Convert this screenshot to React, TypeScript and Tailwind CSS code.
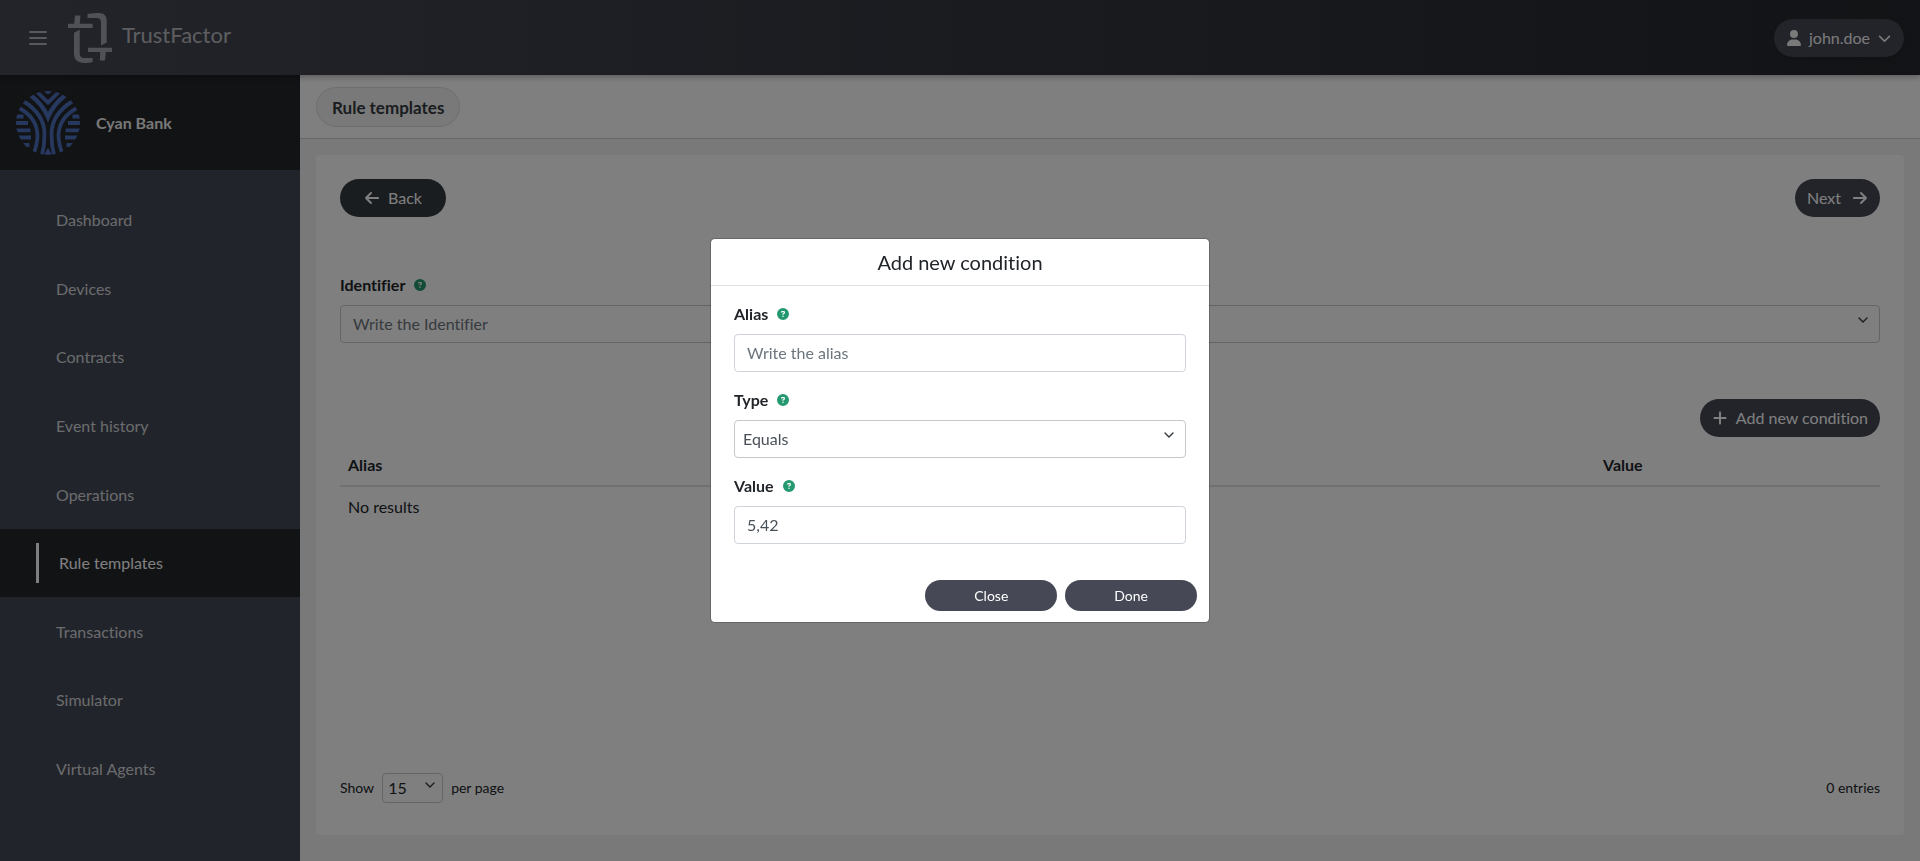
import { useState, type ReactNode } from 'react';
import { FaArrowLeft, FaArrowRight, FaChevronDown, FaCircleQuestion, FaPlus, FaUser } from 'react-icons/fa6';

const NAV_ITEMS = [
  'Dashboard',
  'Devices',
  'Contracts',
  'Event history',
  'Operations',
  'Rule templates',
  'Transactions',
  'Simulator',
  'Virtual Agents',
];

const ACTIVE_ITEM = 'Rule templates';

function MenuIcon() {
  return (
    <svg width="18" height="16" viewBox="0 0 18 16" fill="none" stroke="currentColor" strokeWidth="2" strokeLinecap="round" aria-hidden="true">
      <path d="M1 2h16M1 8h16M1 14h16" />
    </svg>
  );
}

function TrustFactorLogo() {
  return (
    <svg width="44" height="50" viewBox="0 0 44 50" fill="#9fa3ad" aria-hidden="true">
      <path d="M7 2.500h5.400l-.6 8.200h12.900v4.300H0v-4.300h6.200z" />
      <path d="M19.500 1C24 .2 29 0 31 0c4.600 0 7.700 2.700 7.700 7.500V29.500L33 32.500V9.500C33 6.400 31.500 5 28.500 5H19.500z" />
      <path d="M37 47.500h-5.200l.5-8.500H20v-4.300h24V39h-6.200z" />
      <path d="M24.700 49c-3 .8-5.700 1-8 1C9.500 50 6 46.500 6 40.500V19.800l5.700-3v22.700c0 4 1.600 5.600 5 5.600h8z" />
    </svg>
  );
}

function BankLogo() {
  return (
    <svg width="64" height="64" viewBox="0 0 64 64" fill="none" stroke="#4c70ba" strokeWidth="3.800" aria-hidden="true">
      <defs>
        <clipPath id="bank-clip">
          <circle cx="32" cy="32" r="32" />
        </clipPath>
      </defs>
      <g clipPath="url(#bank-clip)">
        <path d="M28-2l4 3 4-3" />
        <path d="M19-1l13 12.500L45-1" />
        <path d="M15 4.500Q27 14 32 26q5-12 17-21.500" strokeWidth="4.400" />
        <path d="M7 10Q28.500 23 28.500 43 28.500 54 26 64" />
        <path d="M57 10Q35.500 23 35.500 43 35.500 54 38 64" />
        <path d="M1 16Q21.500 26 21.500 45 21 55 17 64" />
        <path d="M63 16Q42.500 26 42.500 45 43 55 47 64" />
        <path d="M0 25.500h7.500M56.500 25.500H64M0 32h12M52 32h12M0 39.300h14.500M49.500 39.300H64M0 46.500h15M49 46.500h15M0 54h13.500M50.500 54H64" />
        <path d="M30 64l2-3.500 2 3.500" />
      </g>
    </svg>
  );
}

function SelectArrow() {
  return (
    <svg width="10" height="6" viewBox="0 0 10 6" fill="none" stroke="#343a40" strokeWidth="1.400" strokeLinecap="round" aria-hidden="true">
      <path d="M1 1l4 4 4-4" />
    </svg>
  );
}

function FieldLabel({ htmlFor, children }: { htmlFor: string; children: ReactNode }) {
  return (
    <label htmlFor={htmlFor} className="mb-2 flex items-center gap-[9px] font-bold leading-6">
      {children}
      <FaCircleQuestion className="size-3 text-[#24996f]" />
    </label>
  );
}

function ConditionModal() {
  const [value, setValue] = useState('5,42');

  return (
    <div className="fixed inset-0 z-20 flex items-center justify-center bg-black/50">
      <div
        role="dialog"
        aria-modal="true"
        aria-labelledby="modal-title"
        className="w-[500px] rounded-[5px] border border-black/20 bg-white bg-clip-padding"
      >
        <div className="border-b border-[#dee2e6] py-2">
          <h2 id="modal-title" className="text-center text-xl leading-[30px]">Add new condition</h2>
        </div>

        <div className="space-y-4 px-[23px] pt-4">
          <div>
            <FieldLabel htmlFor="alias">Alias</FieldLabel>
            <input
              id="alias"
              type="text"
              placeholder="Write the alias"
              className="block h-[38px] w-full rounded border border-[#ced4da] px-3 pb-px text-[#495057] placeholder:text-[#6c757d]"
            />
          </div>
          <div>
            <FieldLabel htmlFor="type">Type</FieldLabel>
            <div className="relative">
              <select id="type" className="block h-[38px] w-full appearance-none rounded border border-[#c8c8c8] px-2 text-[#495057]">
                <option>Equals</option>
                <option>Greater than</option>
                <option>Less than</option>
              </select>
              <span className="pointer-events-none absolute top-3 right-3">
                <SelectArrow />
              </span>
            </div>
          </div>
          <div>
            <FieldLabel htmlFor="value">Value</FieldLabel>
            <input
              id="value"
              type="text"
              value={value}
              onChange={(e) => setValue(e.target.value)}
              className="block h-[38px] w-full rounded border border-[#ced4da] px-3 pb-px text-[#495057]"
            />
          </div>
        </div>

        <div className="mt-9 flex justify-end gap-2 px-3 pb-[11px] text-sm text-white">
          <button type="button" className="h-[31px] rounded-full bg-[#464955] px-[49px]">Close</button>
          <button type="button" className="h-[31px] rounded-full bg-[#464955] px-[49px]">Done</button>
        </div>
      </div>
    </div>
  );
}

export default function App() {
  return (
    <div className="flex min-h-screen flex-col bg-[#f3f3f3] font-[Lato,sans-serif] text-base text-[#212529] [font-variant-ligatures:none]">
      {/* Top bar */}
      <header className="z-10 flex h-[75px] items-center bg-gradient-to-r from-[#454955] to-[#25272c] pr-4 pl-[29px] shadow-[0_2px_6px_rgba(0,0,0,0.3)]">
        <button type="button" aria-label="Toggle menu" className="text-[#b0b2b8]">
          <MenuIcon />
        </button>
        <div className="ml-[21px] flex items-center gap-[10px]">
          <TrustFactorLogo />
          <span className="pb-1.5 text-[22px] text-[#bcbdc1]">TrustFactor</span>
        </div>
        <button type="button" className="ml-auto flex h-[38px] items-center gap-2 rounded-full bg-[#454955] px-[13px] text-[#f4f4f4] shadow-md">
          <FaUser className="h-4 w-[14px]" />
          john.doe
          <FaChevronDown className="h-[14px] w-[13px]" />
        </button>
      </header>

      <div className="flex flex-1">
        {/* Sidebar */}
        <aside className="flex w-[300px] shrink-0 flex-col bg-[#444956]">
          <div className="flex h-[95px] items-center gap-4 bg-[#24262b] px-4">
            <BankLogo />
            <span className="font-bold text-[#f0f0f0]">Cyan Bank</span>
          </div>
          <nav className="flex flex-1 flex-col pt-4 pb-[58px]">
            {NAV_ITEMS.map((item) =>
              item === ACTIVE_ITEM ? (
                <a key={item} href="#" aria-current="page" className="flex flex-1 items-center bg-[#24262b] pl-9 text-white">
                  <span className="flex h-10 items-center border-l-3 border-white pl-5">{item}</span>
                </a>
              ) : (
                <a key={item} href="#" className="flex flex-1 items-center pl-14 text-[#d6d7da]">
                  {item}
                </a>
              )
            )}
          </nav>
        </aside>

        <main className="flex min-w-0 flex-1 flex-col">
          <div className="flex h-16 items-center border-b border-[#d2d2d2] bg-white px-4 pb-[11px] pt-3">
            <h1 className="flex h-10 items-center rounded-full border border-[#dddddd] bg-[#f3f3f3] px-[15px] pt-px text-[17px] font-bold text-[#343a40]">
              Rule templates
            </h1>
          </div>

          {/* Content card */}
          <section className="mx-4 mt-4 mb-[26px] flex flex-1 flex-col rounded bg-white p-6">
            <div className="flex justify-between text-white">
              <button type="button" className="flex h-[38px] items-center gap-2 rounded-full bg-[#343a40] px-6">
                <FaArrowLeft className="size-4" />
                Back
              </button>
              <button type="button" className="flex h-[38px] items-center gap-[11px] rounded-full bg-[#454955] px-3">
                Next
                <FaArrowRight className="size-4" />
              </button>
            </div>

            <div className="mt-14">
              <FieldLabel htmlFor="identifier">Identifier</FieldLabel>
              <div className="relative">
                <select id="identifier" className="block h-[38px] w-full appearance-none rounded border border-[#c8c8c8] px-3 text-[#6c757d]">
                  <option>Write the Identifier</option>
                </select>
                <span className="pointer-events-none absolute top-3 right-3">
                  <SelectArrow />
                </span>
              </div>
            </div>

            <button type="button" className="mt-14 flex h-[38px] items-center gap-2 self-end rounded-full bg-[#454955] px-3 text-white">
              <FaPlus className="size-4" />
              Add new condition
            </button>

            <table className="mt-2 w-full table-fixed text-left">
              <thead>
                <tr className="border-b-2 border-[#dee2e6]">
                  <th className="w-2/5 px-2 pt-2 pb-2 leading-6">Alias</th>
                  <th className="px-2 leading-6">Type</th>
                  <th className="w-[285px] px-2 leading-6">Value</th>
                </tr>
              </thead>
              <tbody>
                <tr>
                  <td colSpan={3} className="px-2 py-2 leading-6">No results</td>
                </tr>
              </tbody>
            </table>

            <div className="mt-auto mb-2 flex items-center text-sm">
              <label htmlFor="page-size">Show</label>
              <div className="relative mx-2">
                <select id="page-size" className="block h-[30px] w-[61px] appearance-none rounded border border-[#c8c8c8] px-[5px] text-base">
                  <option>15</option>
                  <option>30</option>
                  <option>50</option>
                </select>
                <span className="pointer-events-none absolute top-[9px] right-2">
                  <SelectArrow />
                </span>
              </div>
              <span>per page</span>
              <span className="ml-auto">0 entries</span>
            </div>
          </section>
        </main>
      </div>

      <ConditionModal />
    </div>
  );
}
